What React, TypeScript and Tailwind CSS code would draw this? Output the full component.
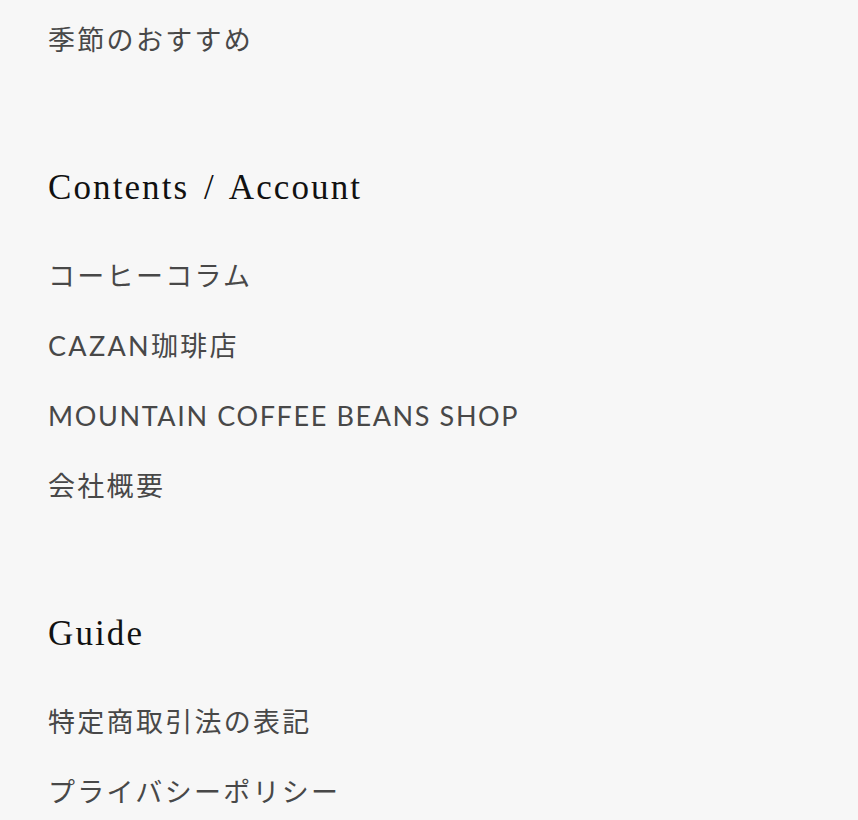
const sections: { title?: string; links: string[] }[] = [
  { links: ['季節のおすすめ'] },
  {
    title: 'Contents / Account',
    links: ['コーヒーコラム', 'CAZAN珈琲店', 'MOUNTAIN COFFEE BEANS SHOP', '会社概要'],
  },
  { title: 'Guide', links: ['特定商取引法の表記', 'プライバシーポリシー'] },
];

// Japanese labels run a touch wider than the Latin ones
const isLatin = (text: string) => /^[\x20-\x7e]+$/.test(text);

export default function App() {
  return (
    <div className="min-h-screen bg-[#f7f7f7] px-12 pt-[5px] overflow-hidden">
      {sections.map((section, i) => (
        <div key={i} className={i > 0 ? 'mt-[78px]' : ''}>
          {section.title && (
            <h2 className="h-[70px] mb-[18px] flex items-center text-[35px] tracking-[0.06em] [word-spacing:4px] text-[#111] font-['Liberation_Serif',serif]">
              {section.title}
            </h2>
          )}
          <ul>
            {section.links.map((link) => (
              <li key={link} className="h-[70px] flex items-center">
                <a
                  className={`text-[27px] text-[#484848] font-['Lato','Noto_Sans_CJK_JP',sans-serif] ${
                    isLatin(link) ? 'tracking-[0.06em]' : 'tracking-[0.085em]'
                  }`}
                >
                  {link}
                </a>
              </li>
            ))}
          </ul>
        </div>
      ))}
    </div>
  );
}
